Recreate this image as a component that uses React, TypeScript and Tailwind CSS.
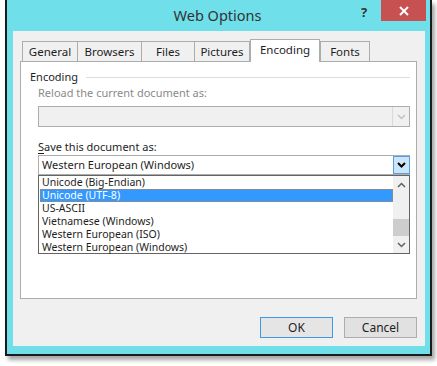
import React from "react";

const font = { fontFamily: '"Noto Sans", "Open Sans", sans-serif' };

const tabs = [
  { label: "General", w: "w-[56px]" },
  { label: "Browsers", w: "w-[65px]" },
  { label: "Files", w: "w-[54px]" },
  { label: "Pictures", w: "w-[56px]" },
  { label: "Encoding", w: "w-[70px]", active: true },
  { label: "Fonts", w: "w-[50px]" },
];

const encodings = [
  "Unicode (Big-Endian)",
  "Unicode (UTF-8)",
  "US-ASCII",
  "Vietnamese (Windows)",
  "Western European (ISO)",
  "Western European (Windows)",
];

const Chevron = ({ up = false, color = "#000", weight = 2 }: { up?: boolean; color?: string; weight?: number }) => (
  <svg width="9" height="6" viewBox="0 0 9 6">
    <polyline
      points={up ? "1,5 4.5,1.5 8,5" : "1,1 4.5,4.5 8,1"}
      fill="none"
      stroke={color}
      strokeWidth={weight}
    />
  </svg>
);

export default function App() {
  return (
    <div className="w-[437px] h-[366px] bg-white pl-[5px] text-[11px] text-[#1e1e1e]" style={font}>
      {/* Window frame */}
      <div className="w-[427px] h-[356px] bg-[#6fdfea] border-x-2 border-b-2 border-[#1b1b1b] border-t-0 shadow-[3px_4px_4px_rgba(0,0,0,0.35)] flex flex-col">
        {/* Title bar */}
        <div className="h-[31px] flex items-start">
          <div className="flex-1 text-center text-[14.5px] text-[#333] pt-[5px] pl-[74px]">Web Options</div>
          <div className="w-[20px] text-center text-[13px] font-bold text-[#333] pt-[3px] mr-[7px]">?</div>
          <div className="w-[45px] h-[21px] bg-[#c75050] flex items-center justify-center mr-[4px]">
            <svg width="10" height="10" viewBox="0 0 10 10">
              <path d="M1 1L9 9M9 1L1 9" stroke="#fff" strokeWidth="2" />
            </svg>
          </div>
        </div>

        {/* Client area */}
        <div className="ml-[6px] w-[412px] h-[315px] bg-[#f0f0f0] flex flex-col">
          {/* Tab strip */}
          <div className="h-[30px] flex items-end pl-[9px] text-[11.5px]">
            {tabs.map((t, i) =>
              t.active ? (
                <div
                  key={t.label}
                  className={`${t.w} h-[23px] -mb-px relative z-10 bg-white border border-b-0 border-[#acacac] flex items-center justify-center pb-[2px]`}
                >
                  {t.label}
                </div>
              ) : (
                <div
                  key={t.label}
                  className={`${t.w} h-[20px] bg-[#f0f0f0] border border-b-0 border-[#acacac] flex items-center justify-center ${i > 0 && !tabs[i - 1].active ? "-ml-px" : ""}`}
                >
                  {t.label}
                </div>
              )
            )}
          </div>

          {/* Tab page */}
          <div className="ml-[7px] w-[397px] h-[238px] bg-white border border-[#acacac] flex flex-col pt-[7px]">
            <div className="h-[16px] flex items-center pl-[9px] pr-[6px]">
              <span>Encoding</span>
              <div className="flex-1 h-px bg-[#dcdcdc] ml-[8px]" />
            </div>

            <div className="pl-[17px] pr-[6px] flex flex-col">
              <div className="h-[16px] leading-[16px] text-[#8a8a8a]">Reload the current document as:</div>
              <div className="mt-[5px] h-[21px] bg-[#f0f0f0] border border-[#adadad] flex justify-end">
                <div className="w-[17px] h-full border-l border-[#d9d9d9] flex items-center justify-center">
                  <Chevron color="#c2c2c2" weight={1.5} />
                </div>
              </div>

              <div className="mt-[12px] h-[16px] leading-[16px]">
                <span className="underline underline-offset-2">S</span>ave this document as:
              </div>
              <div className="h-[20px] bg-white border border-[#adadad] flex items-center">
                <span className="flex-1 pl-[3px]">Western European (Windows)</span>
                <div className="w-[17px] h-full bg-[#cce4f7] border border-[#569de5] flex items-center justify-center -mr-px">
                  <Chevron color="#000" weight={2} />
                </div>
              </div>

              {/* Dropdown list */}
              <div className="h-[79px] bg-white border border-[#646464] flex text-[10.5px]">
                <div className="flex-1 flex flex-col pl-px">
                  {encodings.map((e) =>
                    e === "Unicode (UTF-8)" ? (
                      <div
                        key={e}
                        className="h-[13px] leading-[11px] bg-[#3399ff] text-white border border-dotted border-[#c8823c] pl-[1px]"
                      >
                        {e}
                      </div>
                    ) : (
                      <div key={e} className="h-[13px] leading-[13px] pl-[2px]">
                        {e}
                      </div>
                    )
                  )}
                </div>
                <div className="w-[16px] bg-[#f0f0f0] flex flex-col items-center">
                  <div className="h-[17px] flex items-center justify-center">
                    <Chevron up color="#606060" weight={1.5} />
                  </div>
                  <div className="flex-1" />
                  <div className="w-full h-[17px] bg-[#cdcdcd]" />
                  <div className="h-[17px] flex items-center justify-center">
                    <Chevron color="#606060" weight={1.5} />
                  </div>
                </div>
              </div>
            </div>
          </div>

          {/* Buttons */}
          <div className="mt-[18px] flex justify-end gap-[11px] pr-[8px]">
            <button className="w-[73px] h-[21px] bg-[#e5e5e5] border border-[#3c9ae8] text-[12px]" style={font}>
              OK
            </button>
            <button className="w-[73px] h-[21px] bg-[#e1e1e1] border border-[#adadad] text-[12px]" style={font}>
              Cancel
            </button>
          </div>
        </div>
      </div>
    </div>
  );
}
